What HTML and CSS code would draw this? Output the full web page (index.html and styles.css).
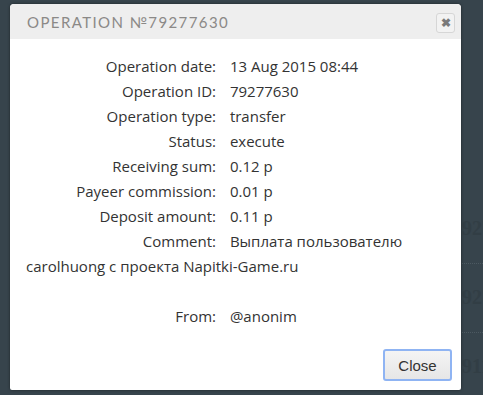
FILE: index.html
```html
<!DOCTYPE html>
<html lang="en">
<head>
  <meta charset="UTF-8">
  <title>Operation №79277630</title>
  <link rel="stylesheet" href="styles.css">
</head>
<body>

  <div class="page">
    <div class="history-row">927</div>
    <div class="history-row">927</div>
    <div class="history-row">911</div>
  </div>

  <div class="modal">
    <div class="modal-header">
      <h3>Operation №79277630</h3>
      <button class="modal-x">&#10006;</button>
    </div>

    <div class="modal-body">
      <div class="row"><span class="label">Operation date:</span> 13 Aug 2015 08:44</div>
      <div class="row"><span class="label">Operation ID:</span> 79277630</div>
      <div class="row"><span class="label">Operation type:</span> transfer</div>
      <div class="row"><span class="label">Status:</span> execute</div>
      <div class="row"><span class="label">Receiving sum:</span> 0.12 р</div>
      <div class="row"><span class="label">Payeer commission:</span> 0.01 р</div>
      <div class="row"><span class="label">Deposit amount:</span> 0.11 р</div>
      <div class="row"><span class="label">Comment:</span> Выплата пользователю<br>carolhuong с проекта Napitki-Game.ru</div>
      <div class="row empty"></div>
      <div class="row"><span class="label">From:</span> @anonim</div>
    </div>

    <div class="modal-footer">
      <button class="btn-close">Close</button>
    </div>
  </div>

</body>
</html>
```

FILE: styles.css
```css
body {
  margin: 0;
  padding: 0;
  background-color: #37444c;
  font-family: "Open Sans", Arial, sans-serif;
  width: 483px;
  height: 395px;
  overflow: hidden;
  position: relative;
}
.page {
  box-sizing: border-box;
  height: 395px;
  padding: 217px 0 0 462px;
  overflow: hidden;
}
.history-row {
  font-family: "Liberation Serif", serif;
  font-size: 20px;
  font-weight: bold;
  color: #323e45;
  height: 46px;
  margin-bottom: 22px;
  border-bottom: 1px dotted #4c5961;
  white-space: nowrap;
}
.modal {
  position: absolute;
  left: 10px;
  top: 4px;
  width: 451px;
  height: 386px;
  background-color: white;
  border-radius: 4px 4px 2px 2px;
  box-shadow: 0 0 3px rgba(0, 0, 0, 0.5);
  display: flex;
  flex-direction: column;
  overflow: hidden;
}
.modal-header {
  background-color: #eeeeee;
  height: 35px;
  display: flex;
  align-items: center;
  justify-content: space-between;
  padding: 0 6px 0 17px;
}
.modal-header h3 {
  margin: 0;
  font-family: "Lato", sans-serif;
  font-weight: normal;
  font-size: 15px;
  letter-spacing: 1.4px;
  text-transform: uppercase;
  color: #8b8987;
  padding-top: 1px;
}
.modal-x {
  width: 19px;
  height: 20px;
  padding: 0;
  margin-top: 2px;
  border: 1px solid #d6d6d6;
  border-radius: 3px;
  background-color: #f2f2f2;
  color: #7a7a7a;
  font-size: 12px;
  font-weight: bold;
  line-height: 18px;
  text-align: center;
}
.modal-body {
  flex: 1;
  padding: 15px 16px 0 16px;
  font-size: 15px;
  line-height: 25px;
  color: #333;
}
.row {
  min-height: 25px;
}
.label {
  display: inline-block;
  width: 190px;
  text-align: right;
  margin-right: 10px;
}
.modal-footer {
  display: flex;
  justify-content: flex-end;
  padding: 0 9px 9px 0;
}
.btn-close {
  width: 69px;
  height: 32px;
  font-family: "Liberation Sans", Arial, sans-serif;
  font-size: 15px;
  color: #333;
  background: linear-gradient(#f4f4f4, #e6e6e6);
  border: 2px solid #8fb4f3;
  border-radius: 3px;
}
```
